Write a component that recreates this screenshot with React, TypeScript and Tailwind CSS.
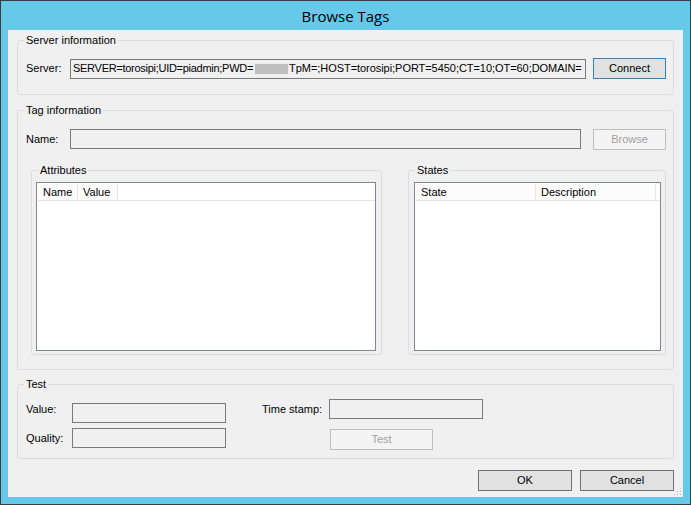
import React from "react";

function Group({
  title,
  className,
  labelClass,
  children,
}: {
  title: string;
  className: string;
  labelClass?: string;
  children?: React.ReactNode;
}) {
  return (
    <div className={`relative border border-[#dcdcdc] rounded-[3px] ${className}`}>
      <span
        className={`absolute top-[-7px] px-[2px] bg-[#f0f0f0] leading-[13px] text-black ${labelClass ?? "left-[6px]"}`}
      >
        {title}
      </span>
      {children}
    </div>
  );
}

function TextBox({ className, children }: { className: string; children?: React.ReactNode }) {
  return (
    <div
      className={`border border-[#7a7a7a] bg-[#f0f0f0] h-[20px] flex items-center pl-[2px] overflow-hidden whitespace-nowrap leading-[13px] ${className}`}
    >
      {children}
    </div>
  );
}

function Button({
  label,
  className,
  variant,
}: {
  label: string;
  className: string;
  variant: "default" | "normal" | "disabled";
}) {
  const v =
    variant === "default"
      ? "border-[#3c7fb1] bg-[#e1e1e1] text-black"
      : variant === "disabled"
      ? "border-[#bfbfbf] bg-[#f4f4f4] text-[#a0a0a0]"
      : "border-[#707070] bg-[#e1e1e1] text-black";
  return (
    <div className={`border h-[21px] flex items-center justify-center leading-[13px] ${v} ${className}`}>
      {label}
    </div>
  );
}

function ListView({
  className,
  cols,
}: {
  className: string;
  cols: { label: string; w: string }[];
}) {
  return (
    <div className={`border border-[#828790] bg-white ${className}`}>
      <div className="mt-[1px] ml-[1px] h-[17px] flex border-b border-[#e5e5e5]">
        {cols.map((c) => (
          <div
            key={c.label}
            className={`h-full border-r border-[#e5e5e5] bg-[#fcfcfc] flex items-center pl-[5px] leading-[13px] ${c.w}`}
          >
            {c.label}
          </div>
        ))}
      </div>
    </div>
  );
}

export default function App() {
  return (
    <div
      className="w-[691px] h-[505px] bg-[#67c9ea] border border-[#3c3c3c] flex flex-col text-[11px] text-black"
      style={{ fontFamily: '"Liberation Sans", Arial, sans-serif' }}
    >
      <div
        className="h-[29px] flex items-center justify-center text-[15px] leading-[20px] pt-[1px]"
        style={{ fontFamily: '"Open Sans", "Noto Sans", sans-serif' }}
      >
        Browse Tags
      </div>
      <div className="relative mx-[7px] h-[467px] bg-[#f0f0f0] flex flex-col px-[9px] pt-[10px]">
        {/* Server information */}
        <Group title="Server information" className="h-[55px] w-[657px]">
          <div className="flex items-center pt-[17px] pl-[8px]">
            <span className="w-[44px] leading-[13px]">Server:</span>
            <TextBox className="w-[516px]">
              <span className="tracking-[-0.28px]">SERVER=torosipi;UID=piadmin;PWD=</span>
              <span className="inline-block shrink-0 w-[33px] h-[10px] bg-[#c0c0c0] ml-[2px] mr-[1px]" />
              <span className="tracking-[-0.05px]">TpM=;HOST=torosipi;PORT=5450;CT=10;OT=60;DOMAIN=</span>
            </TextBox>
            <Button label="Connect" variant="default" className="ml-[7px] w-[73px]" />
          </div>
        </Group>

        {/* Tag information */}
        <Group title="Tag information" className="mt-[15px] h-[260px] w-[657px]">
          <div className="flex items-start pt-[18px] pl-[8px]">
            <span className="w-[44px] leading-[13px] mt-[4px]">Name:</span>
            <TextBox className="w-[511px]" />
            <Button label="Browse" variant="disabled" className="ml-[12px] w-[73px]" />
          </div>
          <div className="flex mt-[20px] ml-[13px]">
            <Group title="Attributes" className="w-[351px] h-[185px]">
              <ListView
                className="ml-[4px] mt-[11px] w-[340px] h-[169px]"
                cols={[
                  { label: "Name", w: "w-[40px]" },
                  { label: "Value", w: "w-[40px]" },
                ]}
              />
            </Group>
            <Group title="States" className="ml-[26px] w-[258px] h-[185px]">
              <ListView
                className="ml-[5px] mt-[11px] w-[247px] h-[169px]"
                cols={[
                  { label: "State", w: "w-[120px]" },
                  { label: "Description", w: "w-[120px]" },
                ]}
              />
            </Group>
          </div>
        </Group>

        {/* Test */}
        <Group title="Test" className="mt-[14px] h-[75px] w-[657px]">
          <div className="flex pl-[8px]">
            <div className="flex flex-col pt-[18px]">
              <div className="flex items-start">
                <span className="w-[46px] leading-[13px]">Value:</span>
                <TextBox className="w-[154px]" />
              </div>
              <div className="flex items-center mt-[5px]">
                <span className="w-[46px] leading-[13px]">Quality:</span>
                <TextBox className="w-[154px]" />
              </div>
            </div>
            <div className="flex flex-col pt-[14px] ml-[36px]">
              <div className="flex items-center">
                <span className="w-[67px] leading-[13px]">Time stamp:</span>
                <TextBox className="w-[154px]" />
              </div>
              <Button label="Test" variant="disabled" className="mt-[10px] ml-[68px] w-[103px]" />
            </div>
          </div>
        </Group>

        {/* OK / Cancel */}
        <div className="flex justify-end gap-[8px] mt-[11px]">
          <Button label="OK" variant="normal" className="w-[94px]" />
          <Button label="Cancel" variant="normal" className="w-[94px]" />
        </div>

        <svg
          className="absolute right-[1px] bottom-[1px]"
          width="9"
          height="9"
          viewBox="0 0 9 9"
        >
          {[
            [7, 1],
            [4, 4],
            [7, 4],
            [1, 7],
            [4, 7],
            [7, 7],
          ].map(([x, y], i) => (
            <g key={i}>
              <rect x={x} y={y} width="1" height="1" fill="#b8b8b8" />
              <rect x={x + 1} y={y + 1} width="1" height="1" fill="#ffffff" />
            </g>
          ))}
        </svg>
      </div>
    </div>
  );
}
